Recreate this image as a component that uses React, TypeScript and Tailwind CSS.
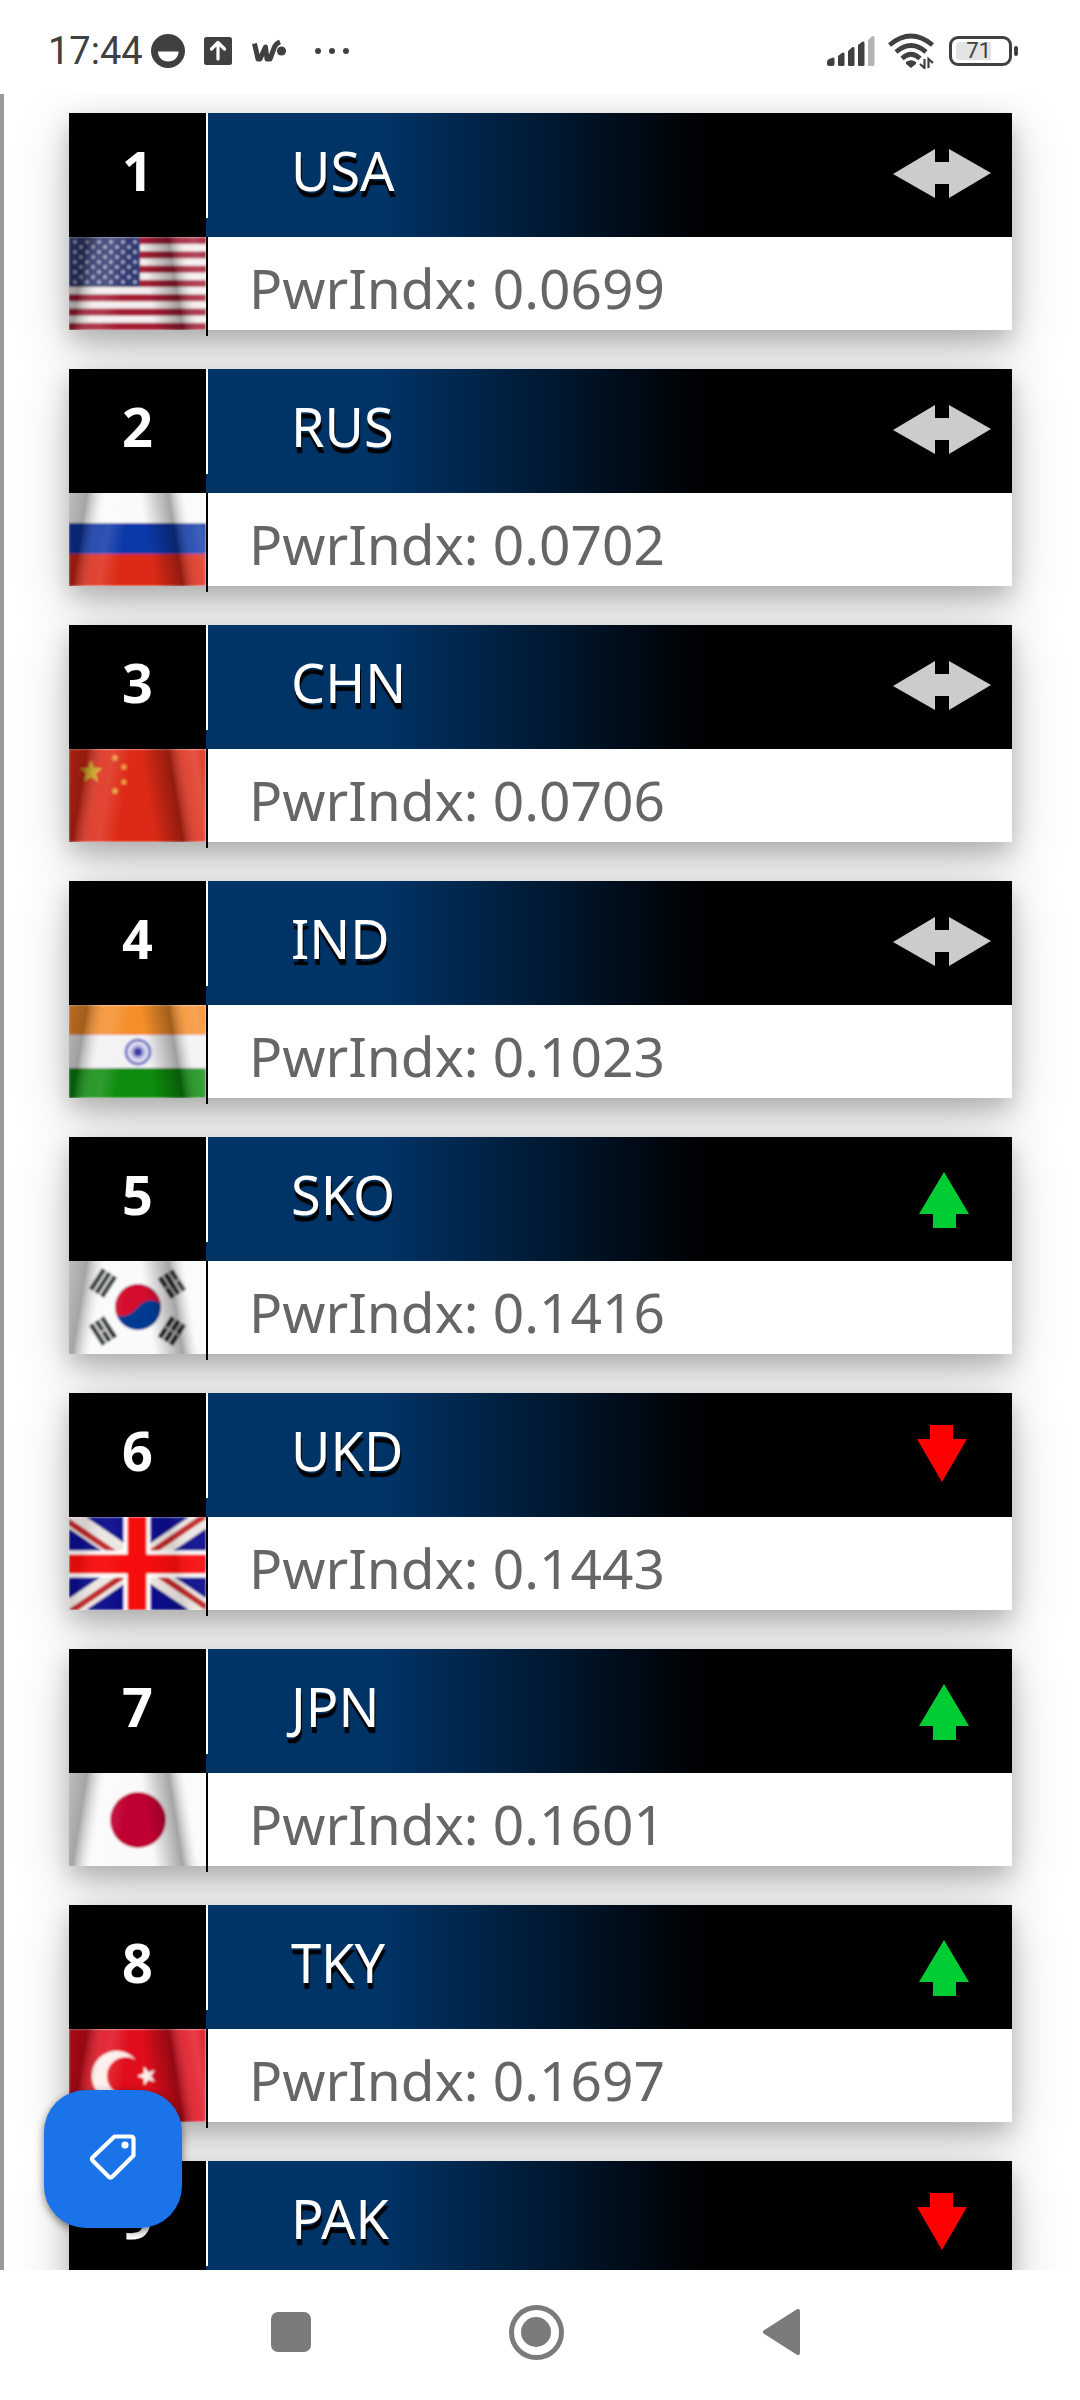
import type { ReactNode } from 'react';

type Trend = 'same' | 'up' | 'down';

interface Nation {
  code: string;
  name: string;
  index?: string;
  trend: Trend;
}

const nations: Nation[] = [
  { code: 'USA', name: 'United States', index: '0.0699', trend: 'same' },
  { code: 'RUS', name: 'Russia', index: '0.0702', trend: 'same' },
  { code: 'CHN', name: 'China', index: '0.0706', trend: 'same' },
  { code: 'IND', name: 'India', index: '0.1023', trend: 'same' },
  { code: 'SKO', name: 'South Korea', index: '0.1416', trend: 'up' },
  { code: 'UKD', name: 'United Kingdom', index: '0.1443', trend: 'down' },
  { code: 'JPN', name: 'Japan', index: '0.1601', trend: 'up' },
  { code: 'TKY', name: 'Turkey', index: '0.1697', trend: 'up' },
  { code: 'PAK', name: 'Pakistan', trend: 'down' },
];

function starPoints(cx: number, cy: number, r: number, turn = -90) {
  return Array.from({ length: 10 }, (_, i) => {
    const a = ((turn + i * 36) * Math.PI) / 180;
    const d = i % 2 ? r * 0.42 : r;
    return `${(cx + d * Math.cos(a)).toFixed(1)},${(cy + d * Math.sin(a)).toFixed(1)}`;
  }).join(' ');
}

function Trigram({ x, y, angle, split }: { x: number; y: number; angle: number; split: number[] }) {
  return (
    <g transform={`translate(${x} ${y}) rotate(${angle})`}>
      {[0, 1, 2].map((i) => (
        <g key={i}>
          <rect x={-12} y={-9 + i * 6.5} width={24} height={5} fill="#222a28" />
          {split.includes(i) && <rect x={-1} y={-9 + i * 6.5} width={2} height={5} fill="#b8b8b8" />}
        </g>
      ))}
    </g>
  );
}

const flagArt: Record<string, ReactNode> = {
  USA: (
    <>
      <rect width="137" height="93" fill="#f4eeee" />
      {[0, 2, 4, 6, 8, 10, 12].map((i) => (
        <rect key={i} y={i * 7.15} width="137" height="7.15" fill="#a51c34" />
      ))}
      <rect width="71" height="50" fill="#333a72" />
      {Array.from({ length: 9 }, (_, r) =>
        Array.from({ length: r % 2 ? 5 : 6 }, (_, c) => (
          <circle key={`${r}-${c}`} cx={6 + c * 12 + (r % 2 ? 6 : 0)} cy={5 + r * 5} r="1.7" fill="#b4bad8" />
        )),
      )}
    </>
  ),
  RUS: (
    <>
      <rect width="137" height="31" fill="#fafafa" />
      <rect y="30" width="137" height="32" fill="#0737a8" />
      <rect y="61" width="137" height="32" fill="#dc2a18" />
    </>
  ),
  CHN: (
    <>
      <rect width="137" height="93" fill="#dd2a14" />
      <polygon points={starPoints(22, 23, 12)} fill="#d8b01c" />
      <polygon points={starPoints(46, 9, 4)} fill="#f0a040" />
      <polygon points={starPoints(55, 18, 4)} fill="#f0a040" />
      <polygon points={starPoints(55, 33, 4)} fill="#f0a040" />
      <polygon points={starPoints(46, 42, 4)} fill="#f0b040" />
    </>
  ),
  IND: (
    <>
      <rect width="137" height="31" fill="#f58e2c" />
      <rect y="30" width="137" height="34" fill="#f2f2f5" />
      <rect y="63" width="137" height="30" fill="#108c08" />
      <circle cx="69" cy="47" r="12" fill="#dcdcf2" stroke="#8080c8" strokeWidth="3" />
      <circle cx="69" cy="47" r="7" fill="#a8a8dc" />
      <circle cx="69" cy="47" r="4" fill="#3c3ca8" />
    </>
  ),
  SKO: (
    <>
      <rect width="137" height="93" fill="#fafafa" />
      <circle cx="69" cy="46" r="23" fill="#063b92" />
      <path d="M47 53A23 23 0 1 1 92 46C91 38 77 36 69 46C62 54 52 58 47 53Z" fill="#d4082e" />
      <Trigram x={34} y={22} angle={-57} split={[]} />
      <Trigram x={103} y={23} angle={57} split={[0, 2]} />
      <Trigram x={34} y={70} angle={57} split={[1]} />
      <Trigram x={103} y={70} angle={-57} split={[0, 1, 2]} />
    </>
  ),
  UKD: (
    <>
      <rect width="137" height="93" fill="#08088c" />
      <path d="M0 0L137 93M137 0L0 93" stroke="#ece6e2" strokeWidth="19" />
      <path d="M-3 3L66 50M140 -4L71 43M-2 97L67 50M140 92L71 45" stroke="#c02828" strokeWidth="6" />
      <path d="M68 0V93M0 47H137" stroke="#fff" strokeWidth="27" />
      <path d="M68 0V93M0 47H137" stroke="#f60808" strokeWidth="19" />
    </>
  ),
  JPN: (
    <>
      <rect width="137" height="93" fill="#fafafa" />
      <circle cx="69" cy="47" r="28" fill="#c00030" />
    </>
  ),
  TKY: (
    <>
      <rect width="137" height="93" fill="#e00a1a" />
      <path d="M67 31A25 25 0 1 0 67 63A19 19 0 1 1 67 31Z" fill="#fdeeea" />
      <polygon points={starPoints(78, 47, 10, 180)} fill="#fdeeea" />
    </>
  ),
  PAK: (
    <>
      <rect width="137" height="93" fill="#0a5a24" />
      <rect width="34" height="93" fill="#fafafa" />
    </>
  ),
};

function Flag({ code, name }: { code: string; name: string }) {
  const fold = code === 'UKD' ? 0.3 : 1;
  return (
    <svg role="img" aria-label={`Flag of ${name}`} viewBox="0 0 137 93" preserveAspectRatio="none" className="h-[93px] w-[137px] shrink-0">
      <defs>
        <linearGradient id={`left-${code}`} gradientUnits="userSpaceOnUse" x1="0" y1="0" x2="68" y2="11">
          <stop offset="0" stopColor="#000" stopOpacity="0.24" />
          <stop offset="0.26" stopColor="#000" stopOpacity="0.34" />
          <stop offset="0.52" stopColor="#fff" stopOpacity="0.12" />
          <stop offset="0.64" stopColor="#fff" stopOpacity="0.14" />
          <stop offset="0.9" stopColor="#fff" stopOpacity="0" />
        </linearGradient>
        <linearGradient id={`right-${code}`} gradientUnits="userSpaceOnUse" x1="68" y1="0" x2="137" y2="-11">
          <stop offset="0.04" stopColor="#000" stopOpacity="0" />
          <stop offset="0.44" stopColor="#000" stopOpacity="0.34" />
          <stop offset="0.66" stopColor="#fff" stopOpacity="0.14" />
          <stop offset="0.8" stopColor="#fff" stopOpacity="0.2" />
          <stop offset="1" stopColor="#fff" stopOpacity="0.04" />
        </linearGradient>
        <filter id={`soft-${code}`} x="0" y="0" width="1" height="1">
          <feGaussianBlur stdDeviation="0.8" edgeMode="duplicate" />
        </filter>
      </defs>
      <g filter={`url(#soft-${code})`}>
        <svg width="137" height="93">{flagArt[code]}</svg>
      </g>
      <rect width="68" height="93" fill={`url(#left-${code})`} opacity={fold} />
      <rect x="68" width="69" height="93" fill={`url(#right-${code})`} opacity={fold} />
    </svg>
  );
}

const trendShapes: Record<Trend, { label: string; fill: string; points: string }> = {
  same: { label: 'No change', fill: '#cccccc', points: '1,29 43,4 43,17 57,17 57,4 99,28 57,53 57,39 43,39 43,53' },
  up: { label: 'Up', fill: '#00cc33', points: '52,3 77,45 64,45 64,59 41,59 41,45 27,45' },
  down: { label: 'Down', fill: '#ff0000', points: '38,0 61,0 61,14 75,14 50,57 25,14 38,14' },
};

function TrendArrow({ trend }: { trend: Trend }) {
  const { label, fill, points } = trendShapes[trend];
  return (
    <svg role="img" aria-label={label} viewBox="0 0 100 60" className="h-[60px] w-[100px] shrink-0">
      <polygon points={points} fill={fill} />
    </svg>
  );
}

function NationCard({ nation, rank }: { nation: Nation; rank: number }) {
  return (
    <li className="bg-white text-[54px] leading-none shadow-[0_11px_22px_rgba(0,0,0,0.2),0_17px_55px_rgba(0,0,0,0.19)]">
      <div className="flex h-[124px]">
        <div className="flex w-[137px] shrink-0 items-center justify-center bg-black pb-2.5 font-bold text-white">{rank}</div>
        <div className="flex flex-1 bg-linear-to-r/srgb from-[#003366] from-22% to-black to-62%">
          <div className="h-[105px] w-0.5 bg-white" />
          <h2 className="flex flex-1 items-center pb-2.5 pl-[83px] text-white [text-shadow:1px_6px_1px_#000]">{nation.code}</h2>
          <div className="flex items-center pr-5">
            <TrendArrow trend={nation.trend} />
          </div>
        </div>
      </div>
      <div className="flex h-[93px]">
        <Flag code={nation.code} name={nation.name} />
        <div className="-mb-1.5 w-0.5 shrink-0 bg-black" />
        {nation.index && (
          <p className="flex flex-1 items-center pt-2 pl-[41px] text-[55px] leading-none text-[#666666]">PwrIndx: {nation.index}</p>
        )}
      </div>
    </li>
  );
}

function StatusBar() {
  return (
    <header className="flex h-[94px] shrink-0 items-center justify-between bg-white pt-2 pr-[62px] pl-12 text-[#404040]">
      <div className="flex items-center">
        <time className="w-[103px] font-[Roboto,sans-serif] text-[38px] leading-none">17:44</time>
        <svg aria-hidden="true" viewBox="0 0 200 36" className="h-9 w-[200px]">
          <circle cx="17" cy="18" r="17" fill="#404040" />
          <path d="M7 18.500H27.500C27.500 24.500 23 28.500 17.200 28.500S7 24.500 7 18.500Z" fill="#fff" />
          <rect x="53" y="4" width="28" height="28" rx="2.500" fill="#404040" />
          <path d="M67 26V10M60.500 16L67 9.500L73.500 16" fill="none" stroke="#fff" strokeWidth="3.200" strokeLinecap="round" strokeLinejoin="round" />
          <path d="M103.500 10.500L107 26H109L114.500 14L116 26H119L123.500 14Q125 10.500 129 9" fill="none" stroke="#404040" strokeWidth="5" strokeLinejoin="round" />
          <circle cx="130.500" cy="18" r="4.600" fill="#404040" />
          <circle cx="167" cy="18" r="3" fill="#404040" />
          <circle cx="181" cy="18" r="3" fill="#404040" />
          <circle cx="195" cy="18" r="3" fill="#404040" />
        </svg>
      </div>
      <div className="flex items-center">
        <svg aria-hidden="true" viewBox="0 0 108 36" className="h-9 w-[108px]">
          <g fill="#404040">
            <path d="M0 29Q0 27 2 26L6 24.500Q7.500 24.500 7.500 26V31Q7.500 33 5.500 33H2Q0 33 0 31Z" />
            <path d="M11 23L15.500 19.500Q17.500 19 17.500 21V31.500Q17.500 33 16 33H12.500Q11 33 11 31.500Z" />
            <path d="M21 18L25.500 14Q27.500 13.500 27.500 15.500V31.500Q27.500 33 26 33H22.500Q21 33 21 31.500Z" />
            <path d="M31 12L35.500 8.500Q37.500 8 37.500 10V31.500Q37.500 33 36 33H32.500Q31 33 31 31.500Z" />
            <path d="M41 7L45.500 3Q47.500 2.500 47.500 4.500V31.500Q47.500 33 46 33H42.500Q41 33 41 31.500Z" fill="#b4b4b4" />
          </g>
          <g fill="none" stroke="#404040" strokeWidth="4.600">
            <path d="M62.500 12Q84 -6 105.500 12" />
            <path d="M69 19Q84 6 99 19" />
            <path d="M75 25.500Q84 17 93 25.500" />
          </g>
          <path d="M79 29Q84 25.500 89 29V31L84 35L79 31Z" fill="#404040" />
          <path d="M97.500 26V35L93 31M101.500 35V26L106 30" fill="none" stroke="#404040" strokeWidth="2.200" />
        </svg>
        <div className="ml-3.5 flex h-[30px] w-[63px] items-center rounded-[9px] border-3 border-[#404040] pl-1">
          <div className="flex h-[18px] w-[35px] items-center justify-end rounded-l-[4px] bg-[#e4e4e4] font-[Roboto,sans-serif] text-[22px] leading-none">71</div>
        </div>
        <div className="ml-0.5 h-2.5 w-1 rounded-[2px] bg-[#404040]" />
      </div>
    </header>
  );
}

function NavBar() {
  return (
    <nav className="flex h-[130px] shrink-0 items-center justify-center gap-[190px] bg-white pr-2 pb-1.5">
      <button type="button" aria-label="Recent apps" className="flex w-14 justify-center">
        <span className="size-10 rounded-[7px] bg-[#7b7b7b]" />
      </button>
      <button type="button" aria-label="Home" className="flex size-[55px] items-center justify-center rounded-full border-5 border-[#7b7b7b]">
        <span className="size-[30px] rounded-full bg-[#7b7b7b]" />
      </button>
      <button type="button" aria-label="Back" className="flex w-14 justify-center">
        <svg viewBox="0 0 37 46" className="h-[46px] w-[37px]">
          <path d="M2 23L35 2V44Z" fill="#7b7b7b" stroke="#7b7b7b" strokeWidth="4" strokeLinejoin="round" />
        </svg>
      </button>
    </nav>
  );
}

export default function App() {
  return (
    <div className="flex h-screen flex-col bg-white font-['Noto_Sans',sans-serif]">
      <StatusBar />
      <main className="relative min-h-0 flex-1 overflow-hidden border-l-4 border-[#9b9999] pt-[19px] pr-[68px] pl-[65px]">
        <ol className="flex flex-col gap-[39px]">
          {nations.map((nation, i) => (
            <NationCard key={nation.code} nation={nation} rank={i + 1} />
          ))}
        </ol>
        <button
          type="button"
          aria-label="Offers"
          className="absolute bottom-[42px] left-10 flex size-[138px] items-center justify-center rounded-[42px] bg-[#1a73e8] pb-1 shadow-[0_3px_8px_rgba(0,0,0,0.5)]"
        >
          <svg viewBox="0 0 48 48" className="size-12">
            <path d="M25.500 3.500H42Q44.500 3.500 44.500 6V22.500L23.500 43.500Q21.500 45.500 19.500 43.500L4 28Q2 26 4 24Z" fill="none" stroke="#fff" strokeWidth="4.200" strokeLinejoin="round" />
            <circle cx="36" cy="12" r="3.600" fill="#fff" />
          </svg>
        </button>
      </main>
      <NavBar />
    </div>
  );
}
